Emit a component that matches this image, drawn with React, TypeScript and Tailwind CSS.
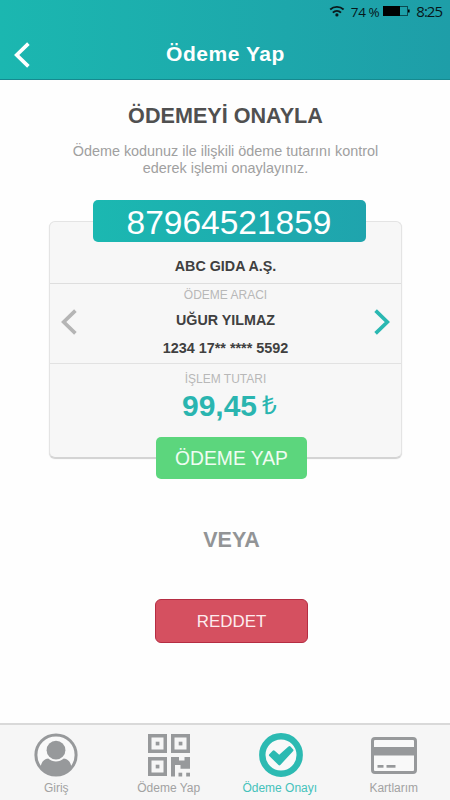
import type { ReactNode } from "react";

type NavItem = {
  label: string;
  icon: ReactNode;
  labelClass: string;
};

function Chevron({ className, direction }: { className: string; direction: "left" | "right" }) {
  return (
    <svg viewBox="0 0 16 26" className={className} fill="none" stroke="currentColor" strokeWidth="3.7">
      <path d={direction === "left" ? "M14.4 1.7 2.7 13 14.4 24.3" : "M1.6 1.7 13.3 13 1.6 24.3"} />
    </svg>
  );
}

function WifiIcon() {
  return (
    <svg viewBox="0 0 16 12" className="ml-px h-3 w-4" fill="none" stroke="#0b1a1c" strokeWidth="1.9">
      <path d="M1.2 4.5a10 10 0 0 1 13.4 0" />
      <path d="M3.8 7.6a6.1 6.1 0 0 1 8.2 0" />
      <circle cx="7.9" cy="9.9" r="1.6" fill="#0b1a1c" stroke="none" />
    </svg>
  );
}

function BatteryIcon() {
  return (
    <svg viewBox="0 0 27 10" className="h-[10px] w-[27px]">
      <rect x="0.5" y="0.5" width="24" height="9" fill="none" stroke="#0b4a50" />
      <rect x="0" y="0" width="17" height="10" fill="#000" />
      <rect x="25" y="3.5" width="1.6" height="3" fill="#000" />
    </svg>
  );
}

function UserIcon() {
  return (
    <svg viewBox="0 0 44 44" className="h-11 w-11" fill="#97999b">
      <circle cx="22" cy="22" r="20.1" fill="#f9f9f9" stroke="#97999b" strokeWidth="3" />
      <circle cx="22" cy="17.2" r="9.4" />
      <path d="M6.6 34.6c.5-5.3 3.2-8.7 7.6-9.1 4.6 3.9 11 3.9 15.6 0 4.4.4 7.1 3.8 7.6 9.1C33.5 40.5 28 43 22 43S10.5 40.5 6.6 34.6Z" />
    </svg>
  );
}

function QrIcon() {
  return (
    <svg viewBox="0 0 42 43" className="h-[43px] w-[42px]" fill="#97999b">
      {["translate(0 0)", "translate(23 0)", "translate(0 23)"].map((t) => (
        <g key={t} transform={t}>
          <path fillRule="evenodd" d="M0 0h19v19H0ZM3.5 3.5v12h12v-12Z" />
          <rect x="7.7" y="7.7" width="3.7" height="3.7" />
        </g>
      ))}
      <path d="M23 23h8v3.5h5.5V23H42v11.7h-9.5V31H27v11.500h-4Z" />
      <rect x="30.5" y="38.7" width="3.7" height="3.8" />
      <rect x="38.2" y="38.7" width="3.8" height="3.8" />
    </svg>
  );
}

function CheckIcon() {
  return (
    <svg viewBox="0 0 44 44" className="h-11 w-11">
      <circle cx="22" cy="22" r="18.7" fill="#f9f9f9" stroke="#2cbab2" strokeWidth="6.4" />
      <path
        d="m10.3 21.3 3.4-3.6q1-1 2 0l4.500 4 9.300-8.300q1-1 2 0l2.500 2.900q1 1 0 2L21.300 32q-.9.900-1.800 0l-9.200-9q-.8-.8 0-1.700Z"
        fill="#2cbab2"
      />
    </svg>
  );
}

function CardIcon() {
  return (
    <svg viewBox="0 0 46 37" className="h-[37px] w-[46px]" fill="#97999b">
      <rect x="1.5" y="1.5" width="43" height="34" rx="2.5" fill="#f9f9f9" stroke="#97999b" strokeWidth="3" />
      <rect x="1" y="10" width="44" height="8.5" />
      <rect x="6.5" y="28" width="6" height="2.7" />
      <rect x="15.5" y="28" width="9" height="2.7" />
    </svg>
  );
}

const NAV_ITEMS: NavItem[] = [
  { label: "Giriş", icon: <UserIcon />, labelClass: "text-[#a2a2a2]" },
  { label: "Ödeme Yap", icon: <QrIcon />, labelClass: "text-[#a2a2a2]" },
  { label: "Ödeme Onayı", icon: <CheckIcon />, labelClass: "text-[#45c2bb] pr-[3px]" },
  { label: "Kartlarım", icon: <CardIcon />, labelClass: "text-[#a2a2a2]" },
];

function Header() {
  return (
    <header className="h-20 border-b border-[#16898f] bg-linear-to-r from-[#1bb7b0] to-[#1e9ea8] px-2">
      <div className="flex h-[22px] items-center justify-end text-[#06171a]">
        <WifiIcon />
        <span className="ml-[6px] pt-0.5 font-['Open_Sans',sans-serif] text-[13.5px] leading-[22px] tracking-[-0.4px]">
          74 %
        </span>
        <span className="ml-1">
          <BatteryIcon />
        </span>
        <span className="ml-[6px] font-['Open_Sans',sans-serif] text-[15px] leading-[22px] tracking-[-1px]">8:25</span>
      </div>
      <div className="flex h-[65px] items-center">
        <button type="button" aria-label="Geri" className="ml-[6px] text-white">
          <Chevron className="h-[26px] w-4" direction="left" />
        </button>
        <h1 className="ml-[136px] pb-[2px] text-[21px] font-bold tracking-[0.55px] text-white">Ödeme Yap</h1>
      </div>
    </header>
  );
}

function PaymentCard() {
  return (
    <section className="mt-11 ml-[49px] flex h-[237px] w-[353px] flex-col items-center rounded-md border border-[#e4e4e4] border-b-[#d4d4d4] bg-[#f7f7f7] shadow-[0_1px_1px_#d0d0d0]">
      <div className="-mt-[22px] ml-[7px] h-[42px] w-[273px] shrink-0 rounded-[5px] bg-linear-to-r from-[#1bb8b1] to-[#1fa4ad] text-center text-[33.5px] leading-[45px] text-white">
        87964521859
      </div>
      <div className="h-[42px] w-full shrink-0 border-b border-[#dedede] pt-3 text-center text-[14.3px] leading-6 font-bold text-[#404040]">
        ABC GIDA A.Ş.
      </div>

      {/* Ödeme aracı seçimi */}
      <div className="flex h-20 w-full shrink-0 items-center justify-between border-b border-[#e2e2e2] px-[11px] text-center">
        <button type="button" aria-label="Önceki" className="pb-[3px] text-[#b5b5b5]">
          <Chevron className="h-[26px] w-4" direction="left" />
        </button>
        <div className="h-full text-[#404040]">
          <p className="pt-[3px] text-[12px] leading-4 text-[#b8b8b8]">ÖDEME ARACI</p>
          <p className="mt-[7px] text-[14.3px] leading-5 font-bold">UĞUR YILMAZ</p>
          <p className="mt-2 text-[14.4px] leading-5 font-bold">1234 17** **** 5592</p>
        </div>
        <button type="button" aria-label="Sonraki" className="pb-[3px] text-[#2ab8b2]">
          <Chevron className="h-[26px] w-4" direction="right" />
        </button>
      </div>

      <p className="pt-[7px] text-[12px] leading-4 text-[#b8b8b8]">İŞLEM TUTARI</p>
      <p className="mt-0.5 ml-2 flex items-center text-[#2ab5b0]">
        <span className="text-[30px] leading-[34px] font-bold">99,45</span>
        <span className="ml-[5px] pb-0.5 text-[26px] leading-8">₺</span>
      </p>
      <button
        type="button"
        className="mt-[14px] ml-3 h-[42px] w-[151px] shrink-0 rounded-[5px] bg-[#5cd67d] text-[19.3px] leading-[44px] text-[#effcf2]"
      >
        ÖDEME YAP
      </button>
    </section>
  );
}

function BottomNav() {
  return (
    <nav className="flex h-[77px] border-t-2 border-[#d9d9d9] bg-[#f6f6f6]">
      {NAV_ITEMS.map((item) => (
        <div key={item.label} className="flex w-[112.5px] flex-col items-center pt-2">
          <div className="flex h-11 items-center">{item.icon}</div>
          <span className={`mt-[3px] text-[12px] leading-4 whitespace-nowrap ${item.labelClass}`}>{item.label}</span>
        </div>
      ))}
    </nav>
  );
}

export default function App() {
  return (
    <div className="flex h-[800px] w-[450px] flex-col overflow-hidden bg-[#fefefe] font-['Liberation_Sans',Arial,sans-serif]">
      <Header />
      <main className="flex-1">
        <h2 className="pt-6 pl-px text-center text-[21.6px] leading-6 font-bold text-[#505050]">ÖDEMEYİ ONAYLA</h2>
        <p className="mt-[15px] pl-px text-center text-[14.4px] leading-[17px] text-[#a0a0a0]">
          Ödeme kodunuz ile ilişkili ödeme tutarını kontrol
          <br />
          ederek işlemi onaylayınız.
        </p>
        <PaymentCard />
        <p className="mt-[70px] ml-[13px] text-center text-[21.5px] leading-6 font-bold text-[#929496]">VEYA</p>
        <button
          type="button"
          className="mt-[47px] ml-[155px] block h-11 w-[153px] rounded-md border border-[#b52d43] bg-[#d55060] text-[16.9px] leading-[44px] text-[#fdecee]"
        >
          REDDET
        </button>
      </main>
      <BottomNav />
    </div>
  );
}
